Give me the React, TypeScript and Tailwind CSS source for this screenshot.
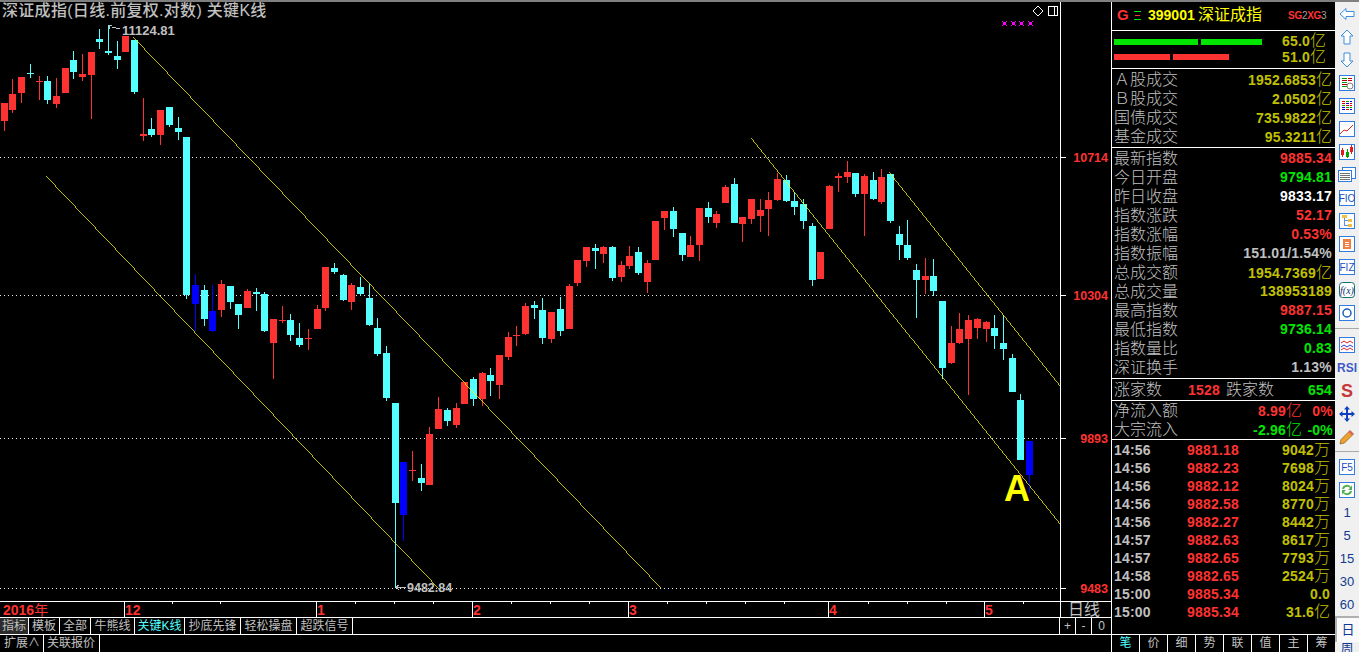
import type { ReactNode } from 'react';

type Kind = 'r' | 'c' | 'b';
// x, colour, body top, body bottom, wick top, wick bottom
type Candle = [number, Kind, number, number, number, number];

const candles: Candle[] = [
  [4, 'r', 103, 121, 103, 131], [12, 'r', 94, 110, 79, 113], [21, 'r', 77, 93, 77, 103],
  [30, 'c', 73, 74, 64, 78], [39, 'r', 81, 82, 76, 100], [47, 'c', 81, 100, 76, 104],
  [56, 'r', 96, 104, 78, 108], [65, 'r', 68, 93, 68, 93], [73, 'c', 60, 72, 51, 79],
  [82, 'r', 74, 77, 54, 81], [91, 'r', 52, 75, 52, 119], [99, 'c', 39, 42, 29, 49],
  [108, 'c', 51, 53, 25, 55], [117, 'c', 56, 60, 41, 69], [125, 'r', 36, 52, 36, 52],
  [134, 'c', 40, 92, 40, 94], [143, 'r', 134, 136, 98, 141], [151, 'c', 129, 135, 118, 137],
  [160, 'r', 110, 135, 110, 145], [169, 'c', 107, 125, 107, 127], [178, 'c', 128, 132, 117, 140],
  [186, 'c', 137, 295, 137, 299], [195, 'b', 285, 304, 274, 331], [204, 'c', 290, 319, 285, 326],
  [212, 'b', 311, 331, 285, 332], [221, 'r', 284, 310, 280, 317], [230, 'c', 286, 302, 286, 309],
  [238, 'c', 304, 315, 304, 329], [247, 'r', 291, 308, 289, 308], [256, 'c', 292, 294, 288, 311],
  [264, 'c', 294, 331, 292, 332], [273, 'r', 319, 343, 319, 379], [282, 'r', 320, 321, 306, 323],
  [290, 'c', 320, 335, 314, 341], [299, 'c', 338, 345, 323, 347], [308, 'r', 338, 339, 329, 350],
  [317, 'r', 309, 329, 305, 329], [325, 'r', 267, 308, 267, 311], [334, 'c', 268, 272, 263, 274],
  [343, 'c', 275, 300, 274, 301], [351, 'r', 285, 302, 283, 310], [360, 'c', 287, 294, 277, 296],
  [369, 'c', 298, 325, 284, 326], [377, 'c', 328, 354, 318, 356], [386, 'c', 353, 398, 346, 401],
  [395, 'c', 403, 503, 403, 588], [403, 'b', 462, 515, 462, 541], [412, 'r', 470, 471, 451, 481],
  [421, 'c', 478, 483, 464, 491], [429, 'r', 434, 485, 427, 485], [438, 'r', 409, 429, 397, 429],
  [447, 'c', 410, 421, 408, 426], [456, 'r', 408, 425, 403, 428], [464, 'r', 382, 404, 382, 404],
  [473, 'c', 379, 399, 377, 406], [482, 'r', 373, 399, 372, 406], [490, 'c', 375, 381, 368, 396],
  [499, 'r', 355, 385, 355, 399], [508, 'r', 337, 357, 332, 360], [516, 'r', 335, 336, 326, 346],
  [525, 'r', 306, 334, 303, 335], [534, 'c', 305, 308, 301, 319], [542, 'c', 310, 338, 298, 344],
  [551, 'r', 312, 339, 312, 343], [560, 'c', 309, 331, 297, 336], [569, 'r', 286, 329, 284, 329],
  [577, 'r', 260, 283, 260, 286], [586, 'r', 247, 261, 247, 267], [595, 'c', 248, 251, 244, 269],
  [603, 'r', 247, 254, 246, 263], [612, 'c', 247, 278, 246, 281], [621, 'r', 265, 277, 261, 282],
  [629, 'r', 256, 266, 246, 269], [638, 'c', 252, 273, 247, 275], [647, 'r', 263, 282, 260, 293],
  [655, 'r', 221, 260, 221, 260], [664, 'r', 211, 218, 211, 230], [673, 'c', 211, 229, 207, 237],
  [682, 'c', 233, 255, 233, 261], [690, 'r', 245, 257, 236, 257], [699, 'r', 208, 245, 208, 261],
  [708, 'c', 208, 217, 202, 223], [716, 'r', 214, 223, 211, 228], [725, 'r', 187, 203, 185, 203],
  [734, 'c', 184, 223, 178, 223], [742, 'r', 217, 224, 217, 242], [751, 'r', 199, 219, 199, 224],
  [760, 'r', 210, 216, 199, 232], [768, 'r', 200, 209, 192, 236], [777, 'r', 179, 200, 173, 201],
  [786, 'c', 180, 201, 175, 202], [794, 'c', 201, 207, 192, 215], [803, 'c', 204, 221, 199, 229],
  [812, 'c', 226, 280, 223, 286], [820, 'r', 252, 279, 252, 279], [829, 'r', 186, 229, 185, 229],
  [838, 'r', 176, 178, 173, 192], [847, 'r', 172, 177, 161, 183], [855, 'c', 173, 194, 173, 197],
  [864, 'r', 176, 194, 174, 236], [873, 'c', 180, 199, 172, 200], [881, 'r', 177, 202, 169, 204],
  [890, 'c', 174, 221, 174, 223], [899, 'c', 234, 245, 226, 260], [907, 'c', 245, 258, 220, 260],
  [916, 'c', 270, 280, 264, 318], [925, 'r', 276, 280, 258, 294], [933, 'c', 276, 291, 259, 296],
  [942, 'c', 301, 368, 301, 379], [951, 'r', 343, 363, 326, 364], [959, 'r', 329, 343, 313, 344],
  [968, 'r', 320, 339, 315, 395], [977, 'r', 319, 328, 318, 339], [986, 'r', 322, 329, 321, 342],
  [994, 'c', 328, 336, 315, 349], [1003, 'c', 343, 349, 315, 360], [1012, 'c', 358, 392, 354, 392],
  [1020, 'c', 400, 460, 394, 460], [1029, 'b', 441, 475, 441, 493],
];

const candleFill: Record<Kind, string> = { r: '#ff3232', c: '#54ffff', b: '#0000ff' };

const gridLines = [
  { y: 157, label: '10714' },
  { y: 295, label: '10304' },
  { y: 438, label: '9893' },
  { y: 588, label: '9483' },
];

const trendLines = [
  [46, 176, 441, 591],
  [133, 37, 661, 588],
  [751, 138, 1061, 525],
  [889, 172, 1060, 386],
];

function Chart() {
  return (
    <svg width={1111} height={599} viewBox="0 2 1111 599" className="block" shapeRendering="crispEdges">
      {gridLines.map((g) => (
        <line key={g.y} x1={0} x2={1060} y1={g.y + 0.5} y2={g.y + 0.5} stroke="#e8e8e8" strokeDasharray="1 3" />
      ))}
      {candles.map(([x, kind, top, bottom, wickTop, wickBottom]) => (
        <g key={x} fill={candleFill[kind]}>
          <rect x={x} y={wickTop} width={1} height={wickBottom - wickTop} />
          <rect x={x - 3} y={top} width={7} height={Math.max(bottom - top, 1)} />
        </g>
      ))}
      {trendLines.map(([x1, y1, x2, y2]) => (
        <line key={x1} x1={x1} y1={y1} x2={x2} y2={y2} stroke="#ffff00" strokeWidth={0.75} />
      ))}

      {/* high / low callouts */}
      <path d="M109 25 L109 29 M109 25 L112 25 M112 27 L120 29" stroke="#c0c0c0" fill="none" />
      <text x={122} y={35} fill="#c0c0c0" fontFamily="Liberation Sans" fontWeight={700} fontSize={13}>
        11124.81
      </text>
      <path d="M396 587 L399 585 M396 587 L399 590 M396 587 L406 587" stroke="#c0c0c0" fill="none" />
      <text x={407} y={592} fill="#c0c0c0" fontFamily="Liberation Sans" fontWeight={700} fontSize={12.5}>
        9482.84
      </text>
      <text x={1004} y={501} fill="#ffff00" fontFamily="Liberation Sans" fontWeight={700} fontSize={36} shapeRendering="auto">
        A
      </text>

      {/* signal marks and the corner buttons */}
      {[1004, 1013, 1021, 1030].map((x) => (
        <g key={x} fill="#ff00ff">
          <rect x={x - 1} y={22} width={3} height={3} />
          <rect x={x - 2} y={21} width={1} height={1} />
          <rect x={x + 2} y={21} width={1} height={1} />
          <rect x={x - 2} y={25} width={1} height={1} />
          <rect x={x + 2} y={25} width={1} height={1} />
        </g>
      ))}
      <path d="M1038 6 L1043 11 L1038 16 L1033 11 Z" stroke="#fff" fill="none" shapeRendering="auto" />
      <rect x={1048.5} y={6.5} width={9} height={9} stroke="#fff" fill="none" />
      <line x1={1054.5} x2={1054.5} y1={6} y2={16} stroke="#fff" />

      {/* price axis */}
      <line x1={1060.5} x2={1060.5} y1={2} y2={601} stroke="#fff" />
      {gridLines.map((g) => (
        <g key={g.y}>
          <line x1={1061} x2={1066} y1={g.y + 0.5} y2={g.y + 0.5} stroke="#fff" />
          <text x={1108} y={g.y + 5} textAnchor="end" fill="#ff3232" fontFamily="Liberation Sans" fontWeight={700} fontSize={12.5}>
            {g.label}
          </text>
        </g>
      ))}
    </svg>
  );
}

const months = [
  { x: 124, label: '12' },
  { x: 316, label: '1' },
  { x: 472, label: '2' },
  { x: 628, label: '3' },
  { x: 828, label: '4' },
  { x: 984, label: '5' },
];
const minorTicks = [172, 220, 355, 394, 433, 511, 550, 589, 667, 706, 745, 784, 868, 907, 946, 1023];

function DateAxis() {
  return (
    <div className="flex h-[16px] border-t border-white">
      <div className="relative w-[1060px] text-[14px] leading-[16px] font-bold text-[#ff3232]">
        <span className="absolute left-[3px] top-0">
          2016<span className="font-normal">年</span>
        </span>
        {months.map((m) => (
          <span key={m.x} className="absolute top-0 h-[15px] border-l border-white" style={{ left: m.x }}>
            {m.label}
          </span>
        ))}
        {minorTicks.map((x) => (
          <span key={x} className="absolute top-0 h-[2px] w-px bg-white" style={{ left: x }} />
        ))}
      </div>
      <div className="flex-1 border-l border-white pl-[7px] text-[16px] leading-[15px] text-[#c0c0c0]">日线</div>
    </div>
  );
}

const tabs = [
  { label: '指标', w: 29, on: true },
  { label: '模板', w: 31 },
  { label: '全部', w: 31 },
  { label: '牛熊线', w: 44 },
  { label: '关键K线', w: 50, cyan: true },
  { label: '抄底先锋', w: 56 },
  { label: '轻松操盘', w: 56 },
  { label: '超跌信号', w: 56 },
];

function TabStrip() {
  return (
    <div className="flex h-[17px] border-t border-white text-[12px] leading-[16px] text-[#c0c0c0]">
      {tabs.map((t) => (
        <div
          key={t.label}
          className={`flex items-center justify-center border-r border-white ${t.on ? 'bg-[#2c2c2c]' : ''} ${t.cyan ? 'text-[#54ffff]' : ''}`}
          style={{ width: t.w }}
        >
          {t.label}
        </div>
      ))}
      <div className="w-[707px] border-r border-white" />
      <div className="flex w-[16px] justify-center border-r border-white">+</div>
      <div className="flex w-[16px] justify-center border-r border-white">-</div>
      <div className="flex flex-1 justify-center">0</div>
    </div>
  );
}

function ExtraStrip() {
  return (
    <div className="flex h-[18px] border-t border-white text-[12px] leading-[17px] text-[#c0c0c0]">
      <div className="w-[44px] border-r border-white pl-[4px]">扩展∧</div>
      <div className="w-[56px] border-r border-white pl-[3px]">关联报价</div>
    </div>
  );
}

const YELLOW = 'text-[#c0c000]';
const RED = 'text-[#ff3232]';
const GREEN = 'text-[#00e600]';
const GREY = 'text-[#c0c0c0]';
const WHITE = 'text-white';

function Num({ color, value, unit }: { color: string; value: string; unit?: string }) {
  return (
    <span className={`${color} text-[14px] font-bold tracking-[0.2px]`}>
      {value}
      {unit && <span className="text-[16px] font-light tracking-normal">{unit}</span>}
    </span>
  );
}

function StatRow({ label, value, color, unit }: { label: string; value: string; color: string; unit?: string }) {
  return (
    <div className="flex h-[19px] items-center justify-between pr-[3px] pl-[2px] leading-[19px]">
      <span className="text-[16px] font-light text-[#c0c0c0]">{label}</span>
      <Num color={color} value={value} unit={unit} />
    </div>
  );
}

const volumeRows = [
  { label: 'Ａ股成交', value: '1952.6853' },
  { label: 'Ｂ股成交', value: '2.0502' },
  { label: '国债成交', value: '735.9822' },
  { label: '基金成交', value: '95.3211' },
];

const indexRows = [
  { label: '最新指数', value: '9885.34', color: RED },
  { label: '今日开盘', value: '9794.81', color: GREEN },
  { label: '昨日收盘', value: '9833.17', color: WHITE },
  { label: '指数涨跌', value: '52.17', color: RED },
  { label: '指数涨幅', value: '0.53%', color: RED },
  { label: '指数振幅', value: '151.01/1.54%', color: GREY },
  { label: '总成交额', value: '1954.7369', color: YELLOW, unit: '亿' },
  { label: '总成交量', value: '138953189', color: YELLOW },
  { label: '最高指数', value: '9887.15', color: RED },
  { label: '最低指数', value: '9736.14', color: GREEN },
  { label: '指数量比', value: '0.83', color: GREEN },
  { label: '深证换手', value: '1.13%', color: GREY },
];

const trades = [
  ['14:56', '9881.18', '9042', '万'],
  ['14:56', '9882.23', '7698', '万'],
  ['14:56', '9882.12', '8024', '万'],
  ['14:56', '9882.58', '8770', '万'],
  ['14:56', '9882.27', '8442', '万'],
  ['14:57', '9882.63', '8617', '万'],
  ['14:57', '9882.65', '7793', '万'],
  ['14:58', '9882.65', '2524', '万'],
  ['15:00', '9885.34', '0.0', ''],
  ['15:00', '9885.34', '31.6', '亿'],
];

function QuotePanel() {
  return (
    <div className="flex w-[223px] flex-col">
      {/* code + name */}
      <div className="flex h-[29px] items-center border-b border-white pb-[2px] pl-[5px]">
        <span className="w-[17px] text-[15px] font-bold text-[#ff3232]">G</span>
        <svg width={8} height={11} className="mr-[6px]" shapeRendering="crispEdges">
          <rect x={0} y={1} width={7} height={1} fill="#00e600" />
          <rect x={1} y={5} width={5} height={1} fill="#ff3232" />
          <rect x={0} y={9} width={7} height={1} fill="#00e600" />
        </svg>
        <span className="w-[50px] text-[14px] font-bold text-[#ffff00]">399001</span>
        <span className="text-[16px] text-[#ffff00]">深证成指</span>
        <span className="ml-[26px] text-[10px] font-bold tracking-[-0.3px] text-[#ff3232]">
          SG<span className="font-normal text-[#a0a0a0]">2</span>XG<span className="font-normal text-[#a0a0a0]">3</span>
        </span>
      </div>

      {/* buy / sell bars */}
      <div className="flex h-[38px] border-b border-white pl-[2px]">
        <div className="flex w-[148px] flex-col gap-[9px] pt-[8px]">
          <div className="flex gap-[3px]">
            <div className="h-[6px] w-[84px] bg-[#00e600]" />
            <div className="h-[6px] w-[61px] bg-[#00e600]" />
          </div>
          <div className="flex gap-[3px]">
            <div className="h-[6px] w-[56px] bg-[#ff3232]" />
            <div className="h-[6px] w-[56px] bg-[#ff3232]" />
          </div>
        </div>
        <div className="flex flex-1 flex-col items-end pt-[2px] pr-[9px] leading-[15px]">
          <Num color={YELLOW} value="65.0" unit="亿" />
          <Num color={YELLOW} value="51.0" unit="亿" />
        </div>
      </div>

      <div className="h-[79px] border-b border-white pt-px">
        {volumeRows.map((r) => (
          <StatRow key={r.label} label={r.label} value={r.value} color={YELLOW} unit="亿" />
        ))}
      </div>

      <div className="h-[231px] border-b border-white pt-px">
        {indexRows.map((r) => (
          <StatRow key={r.label} label={r.label} value={r.value} color={r.color} unit={r.unit} />
        ))}
      </div>

      {/* advancers / decliners */}
      <div className="flex h-[22px] items-center border-b border-white pr-[3px] pl-[2px]">
        <span className="w-[74px] text-[16px] font-light text-[#c0c0c0]">涨家数</span>
        <span className="w-[38px]">
          <Num color={RED} value="1528" />
        </span>
        <span className="text-[16px] font-light text-[#c0c0c0]">跌家数</span>
        <span className="ml-auto">
          <Num color={GREEN} value="654" />
        </span>
      </div>

      <div className="h-[39px] border-b border-white">
        {[
          { label: '净流入额', value: '8.99', pct: '0%', color: RED },
          { label: '大宗流入', value: '-2.96', pct: '-0%', color: GREEN },
        ].map((r) => (
          <div key={r.label} className="flex h-[19px] items-center pr-[2px] pl-[2px]">
            <span className="w-[64px] text-[16px] font-light text-[#c0c0c0]">{r.label}</span>
            <span className="w-[124px] text-right">
              <Num color={r.color} value={r.value} unit="亿" />
            </span>
            <span className="flex-1 text-right">
              <Num color={r.color} value={r.pct} />
            </span>
          </div>
        ))}
      </div>

      {/* tick list */}
      <div className="h-[195px] border-b border-white pt-px">
        {trades.map(([time, price, vol, unit], i) => (
          <div key={i} className="flex h-[18px] items-center pr-[5px] pl-[2px]">
            <span className="w-[73px]">
              <Num color={GREY} value={time} />
            </span>
            <span className="w-[52px]">
              <Num color={RED} value={price} />
            </span>
            <span className="flex-1 text-right">
              <Num color={YELLOW} value={vol} unit={unit || undefined} />
            </span>
          </div>
        ))}
      </div>

      <div className="flex h-[17px] text-[12px] leading-[17px] text-[#c0c0c0]">
        {['笔', '价', '细', '势', '联', '值', '主', '筹'].map((t, i) => (
          <div
            key={t}
            className={`flex-1 text-center ${i < 7 ? 'border-r border-white' : ''} ${i === 0 ? 'text-[#54ffff]' : ''}`}
          >
            {t}
          </div>
        ))}
      </div>
    </div>
  );
}

const FRAME = '#2f7de0';

function Framed({ children }: { children: ReactNode }) {
  return (
    <svg width={16} height={16} viewBox="0 0 16 16" shapeRendering="crispEdges">
      <rect x={0.5} y={0.5} width={15} height={15} fill="#fff" stroke={FRAME} />
      {children}
    </svg>
  );
}

function Lines({ x, w, rows, colors }: { x: number; w: number; rows: number[]; colors: string[] }) {
  return (
    <>
      {rows.map((y, i) => (
        <rect key={y} x={x} y={y} width={w} height={1} fill={colors[i % colors.length]} />
      ))}
    </>
  );
}

function FrameLabel({ children }: { children: string }) {
  return (
    <text x={8} y={12} textAnchor="middle" fill="#1a4fc0" fontFamily="Liberation Sans" fontSize={10} shapeRendering="auto">
      {children}
    </text>
  );
}

const toolIcons: ReactNode[] = [
  <svg key="left" width={16} height={14} viewBox="0 0 16 14">
    <path d="M1 7 L7 1.5 V4.5 H15 V9.5 H7 V12.5 Z" fill="#fff" stroke="#3c8fe0" />
  </svg>,
  <svg key="up" width={14} height={16} viewBox="0 0 14 16">
    <path d="M7 1 L13 7 H10 V15 H4 V7 H1 Z" fill="#fff" stroke="#3c8fe0" />
  </svg>,
  <svg key="down" width={14} height={16} viewBox="0 0 14 16">
    <path d="M7 15 L13 9 H10 V1 H4 V9 H1 Z" fill="#fff" stroke="#3c8fe0" />
  </svg>,
  <Framed key="check">
    <Lines x={3} w={5} rows={[3, 5, 7, 9, 11]} colors={['#00a000', '#c00000']} />
    <Lines x={9} w={4} rows={[3, 5]} colors={['#c00000']} />
    <circle cx={11} cy={11} r={3} fill="none" stroke="#808080" shapeRendering="auto" />
  </Framed>,
  <Framed key="grid">
    <Lines x={3} w={3} rows={[3, 5, 7, 9, 11]} colors={['#e00000', '#e00000', '#00a000', '#0000e0', '#0000e0']} />
    <Lines x={7} w={3} rows={[3, 5, 7, 9, 11]} colors={['#00a000', '#0000e0', '#e00000', '#00a000', '#e00000']} />
    <Lines x={11} w={2} rows={[3, 5, 7, 9, 11]} colors={['#0000e0', '#e00000', '#e00000', '#00a000', '#0000e0']} />
  </Framed>,
  <Framed key="line">
    <path d="M1 13 L5 9 L8 10 L14 4" fill="none" stroke="#e02020" shapeRendering="auto" />
  </Framed>,
  <Framed key="candle">
    <line x1={3.5} x2={3.5} y1={4} y2={13} stroke="#e02020" />
    <rect x={2} y={6} width={3} height={5} fill="#e02020" />
    <line x1={8.5} x2={8.5} y1={5} y2={14} stroke="#00a000" />
    <rect x={7} y={8} width={3} height={5} fill="#00a000" />
    <line x1={12.5} x2={12.5} y1={1} y2={10} stroke="#e02020" />
    <rect x={11} y={3} width={3} height={5} fill="#e02020" />
  </Framed>,
  <svg key="windows" width={18} height={15} viewBox="0 0 18 15" shapeRendering="crispEdges">
    <rect x={4.5} y={0.5} width={13} height={11} fill="#fff" stroke={FRAME} />
    <rect x={0.5} y={3.5} width={13} height={11} fill="#fff" stroke={FRAME} />
    <Lines x={2} w={10} rows={[6, 8, 10, 12]} colors={['#707070']} />
  </svg>,
  <Framed key="fio">
    <FrameLabel>FIO</FrameLabel>
  </Framed>,
  <Framed key="tree">
    <rect x={3} y={2} width={5} height={3} fill="#f0c040" />
    <rect x={9} y={6} width={4} height={3} fill="#f0c040" />
    <rect x={9} y={11} width={4} height={3} fill="#f0c040" />
    <path d="M5 5 V12 H9 M5 7 H9" fill="none" stroke="#6090e0" />
  </Framed>,
  <Framed key="self">
    <rect x={4} y={3} width={8} height={10} fill="#f08040" />
    <Lines x={6} w={4} rows={[6, 8, 10]} colors={['#fff']} />
  </Framed>,
  <Framed key="fiz">
    <FrameLabel>FIZ</FrameLabel>
  </Framed>,
  <svg key="fx" width={16} height={16} viewBox="0 0 16 16">
    <rect x={0.5} y={0.5} width={15} height={15} rx={3} fill="#fff" stroke="#107070" />
    <text x={8} y={12} textAnchor="middle" fill="#103070" fontFamily="Liberation Serif" fontStyle="italic" fontSize={10}>
      f(x)
    </text>
  </svg>,
  <Framed key="ring">
    <circle cx={8} cy={8} r={4} fill="none" stroke="#1a5fc0" strokeWidth={1.5} shapeRendering="auto" />
  </Framed>,
];

const toolIcons2: ReactNode[] = [
  <Framed key="wave">
    <path d="M2 6 L5 4 L8 6 L11 4 L14 6" fill="none" stroke="#e02020" shapeRendering="auto" />
    <path d="M2 10 L5 8 L8 10 L11 8 L14 10" fill="none" stroke="#2040e0" shapeRendering="auto" />
    <path d="M2 13 L5 11 L8 13 L11 11 L14 13" fill="none" stroke="#e02020" shapeRendering="auto" />
  </Framed>,
  <span key="rsi" className="text-[12px] font-bold text-[#4058c8]">RSI</span>,
  <span key="dollar" className="text-[18px] leading-[20px] font-bold text-[#c83838]">S</span>,
  <svg key="move" width={16} height={16} viewBox="0 0 16 16">
    <path d="M8 0 L11 3.5 H9 V7 H12.5 V5 L16 8 L12.5 11 V9 H9 V12.5 H11 L8 16 L5 12.5 H7 V9 H3.5 V11 L0 8 L3.5 5 V7 H7 V3.5 H5 Z" fill="#1040c0" />
  </svg>,
  <svg key="pencil" width={16} height={16} viewBox="0 0 16 16">
    <path d="M11 1.5 L14.5 5 L5.5 14 L1 15 L2 10.5 Z" fill="#f0a030" stroke="#806020" strokeWidth={0.7} />
    <path d="M11 1.5 L14.5 5 L13 6.5 L9.5 3 Z" fill="#e06060" />
  </svg>,
];

function Tool({ children }: { children: ReactNode }) {
  return <div className="flex h-[23px] shrink-0 items-center justify-center">{children}</div>;
}

function Toolbar() {
  return (
    <div className="flex h-[650px] w-[24px] flex-col overflow-hidden bg-[#f0f0f0] text-[#103a90]">
      {toolIcons.map((icon, i) => (
        <Tool key={i}>{icon}</Tool>
      ))}
      <div className="my-[4px] h-px shrink-0 bg-[#a8a8a8]" />
      {toolIcons2.map((icon, i) => (
        <Tool key={i}>{icon}</Tool>
      ))}
      <div className="my-[3px] h-px shrink-0 bg-[#a8a8a8]" />
      <Tool>
        <Framed>
          <FrameLabel>F5</FrameLabel>
        </Framed>
      </Tool>
      <Tool>
        <svg width={16} height={16} viewBox="0 0 16 16">
          <rect x={0.5} y={0.5} width={15} height={15} fill="#fff" stroke={FRAME} />
          <path d="M3 7 A5 5 0 0 1 12 5 L13 3 V8 H9 L11 6 A3.5 3.5 0 0 0 5 7 Z" fill="#50b050" />
          <path d="M13 9 A5 5 0 0 1 4 11 L3 13 V8 H7 L5 10 A3.5 3.5 0 0 0 11 9 Z" fill="#50b050" />
        </svg>
      </Tool>
      {['1', '5', '15', '30', '60'].map((t) => (
        <div key={t} className="flex h-[23px] shrink-0 items-center justify-center text-[13px]">
          {t}
        </div>
      ))}
      <div className="flex h-[26px] shrink-0 items-center justify-center border-t-2 border-l-2 border-[#b0b0b0] bg-[#fafafa] text-[13px]">
        日
      </div>
      <div className="flex shrink-0 justify-center text-[13px] leading-[14px]">周</div>
    </div>
  );
}

export default function App() {
  return (
    <div className="flex h-[652px] w-[1359px] flex-col overflow-hidden bg-black font-['Liberation_Sans','Noto_Sans_CJK_SC',sans-serif]">
      <div className="h-[2px] shrink-0 bg-[#808080]" />
      <div className="flex flex-1">
        <div className="flex w-[1112px] flex-col border-r border-white">
          <div className="relative h-[599px]">
            <Chart />
            <div className="absolute top-0 left-[2px] text-[16px] leading-[17px] font-medium tracking-[0.3px] text-[#c0c0c0]">
              深证成指(日线.前复权.对数) 关键K线
            </div>
          </div>
          <DateAxis />
          <TabStrip />
          <ExtraStrip />
        </div>
        <QuotePanel />
        <Toolbar />
      </div>
    </div>
  );
}
